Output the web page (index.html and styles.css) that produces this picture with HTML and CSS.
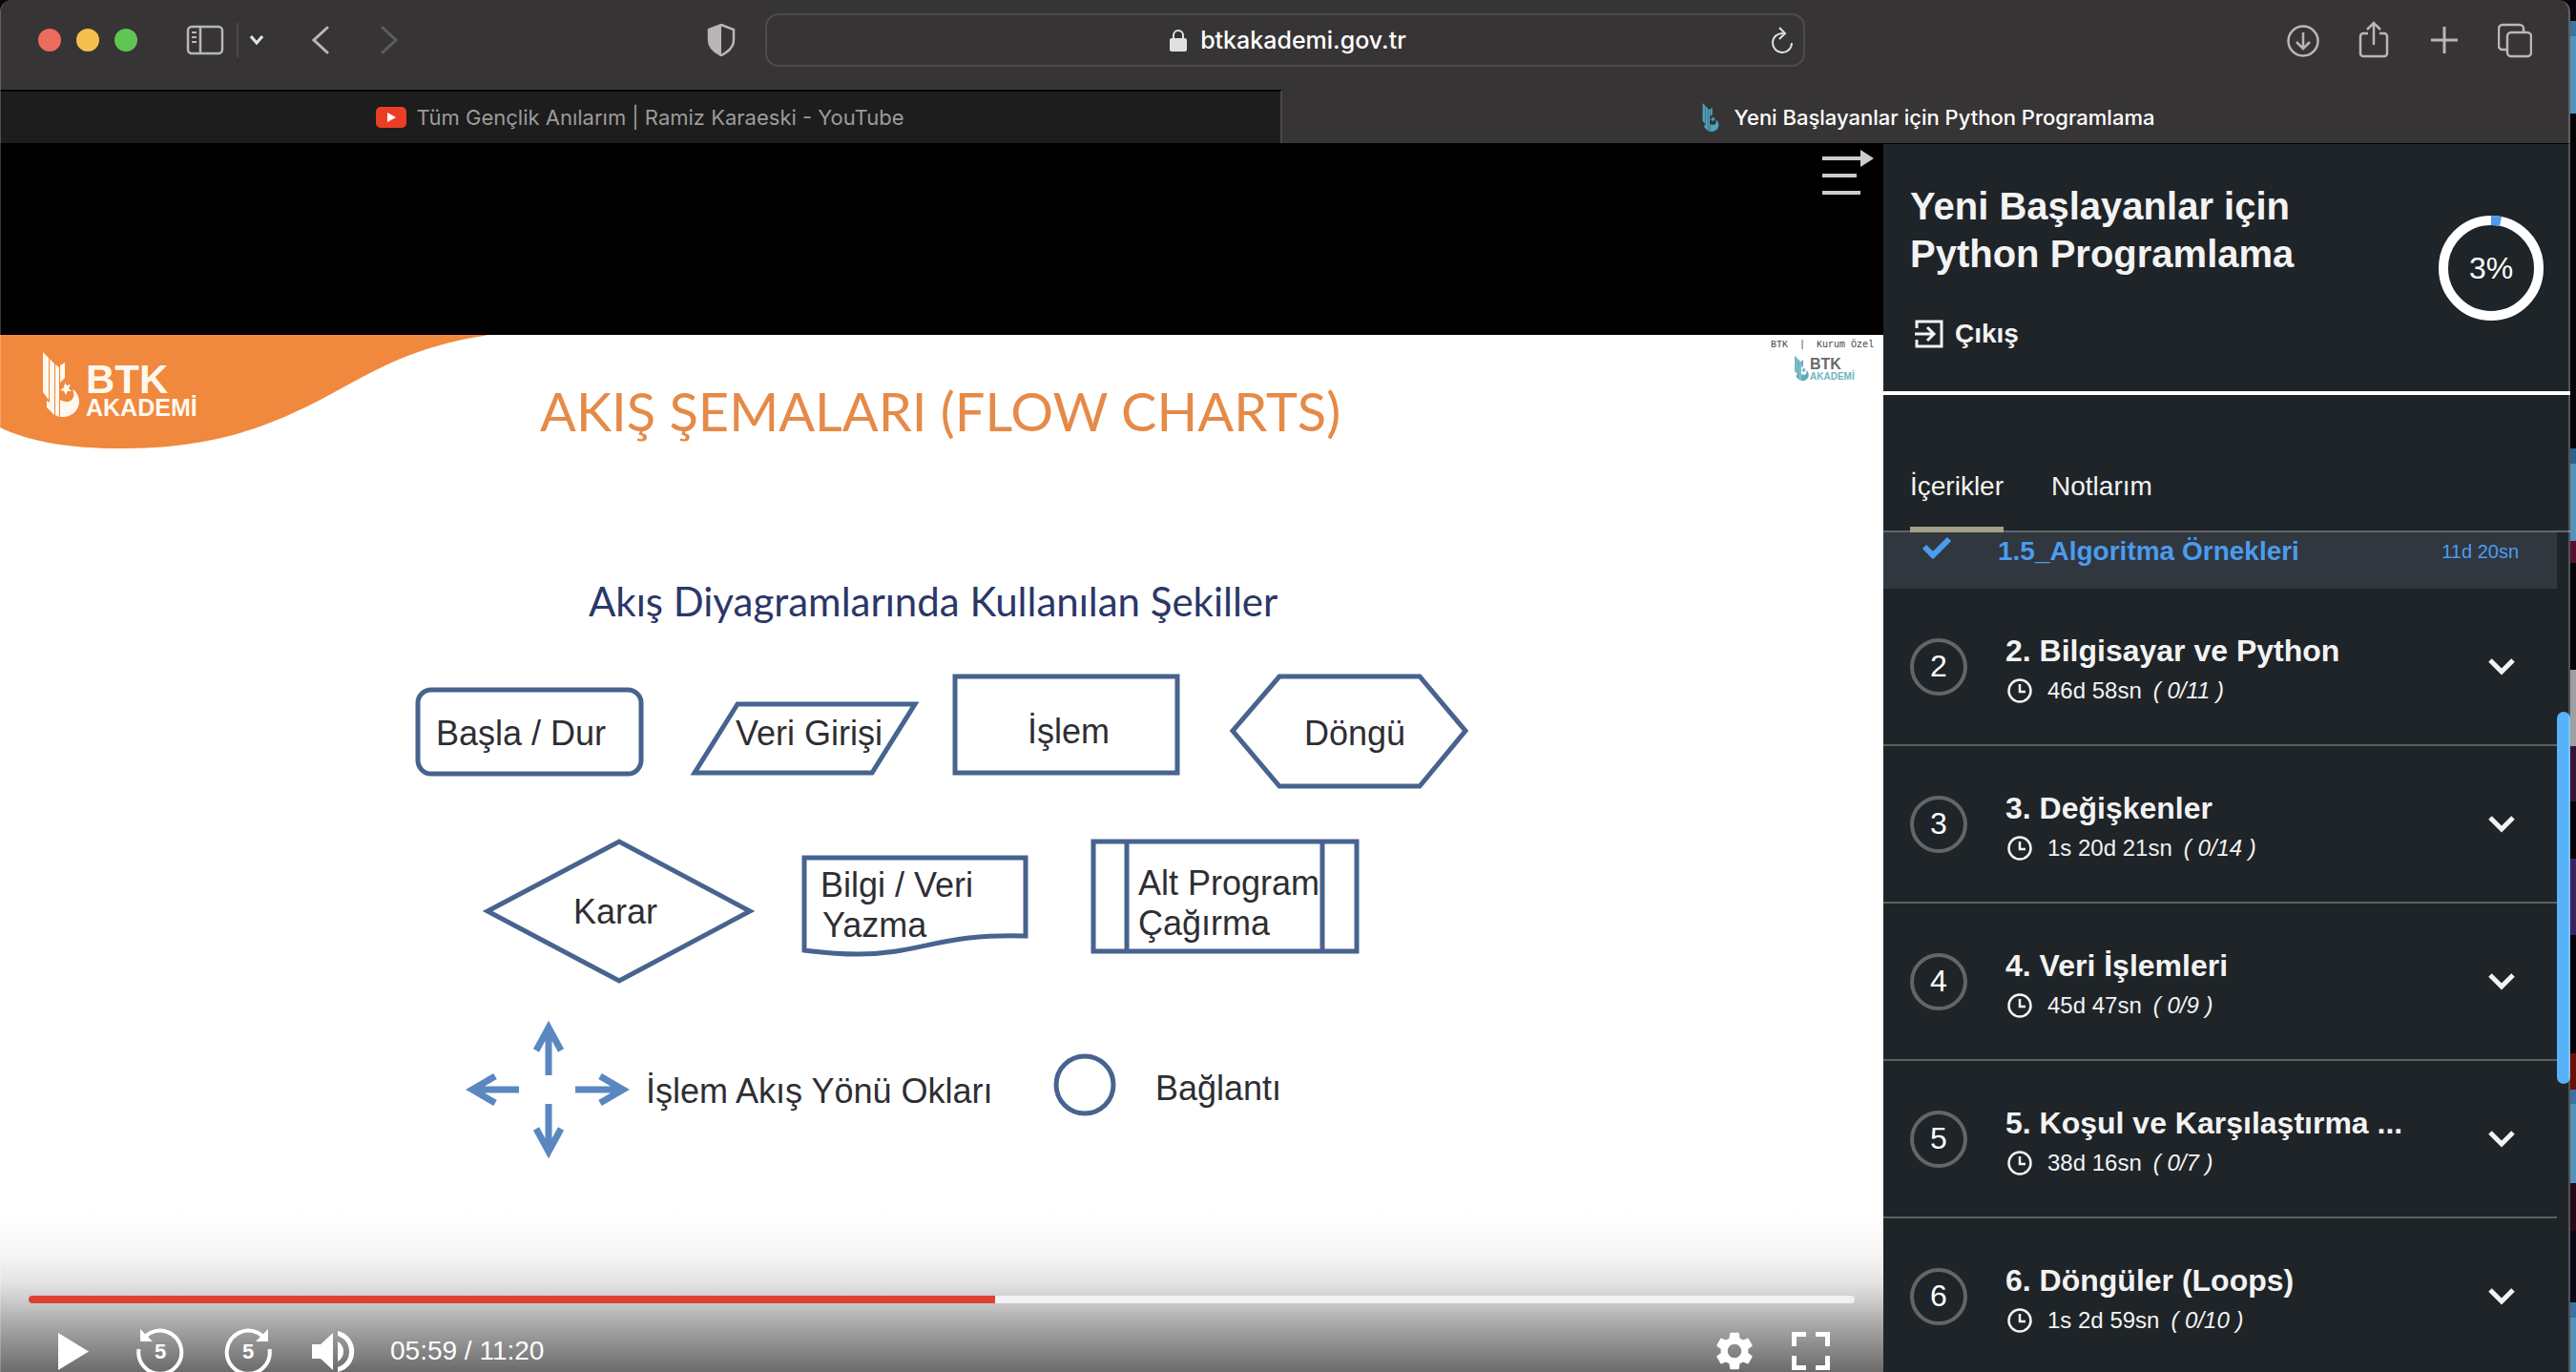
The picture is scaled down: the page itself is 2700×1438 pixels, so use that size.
FILE: index.html
```html
<!DOCTYPE html>
<html lang="tr">
<head>
<meta charset="utf-8">
<title>Yeni Başlayanlar için Python Programlama</title>
<link rel="stylesheet" href="styles.css">
</head>
<body>
<svg class="defs" width="0" height="0" aria-hidden="true">
  <defs>
    <symbol id="btk" viewBox="0 0 38 68">
      <path d="M0 0 L6 6 V50 L0 42Z M7 7 L12 12 V66 L4 58 V51 L7 53Z M13 13 L17 16 V68 L13 66Z M18 14 L23 11 V27 L18 32Z M23 32 l2 3 4-1-2 4 3 3-4 0-2 4-2-4-4-1 4-3Z M18 47 V68 C30 69 38 61 38 52 C38 46 35 41 31 39 C35 48 29 56 18 50Z"/>
    </symbol>
    <symbol id="clock" viewBox="0 0 26 26">
      <circle cx="13" cy="13" r="11.500" fill="none" stroke="currentColor" stroke-width="2.500"/>
      <path d="M13 6V14H19" fill="none" stroke="currentColor" stroke-width="2.500"/>
    </symbol>
    <symbol id="chevron" viewBox="0 0 28 18">
      <path d="M2 2 L14 14 L26 2" fill="none" stroke="currentColor" stroke-width="5"/>
    </symbol>
  </defs>
</svg>

<div class="window">
  <header class="toolbar">
    <div class="toolbar-side">
      <div class="lights"><span class="light red"></span><span class="light yellow"></span><span class="light green"></span></div>
      <button class="icon-btn sidebar-btn" aria-label="Kenar çubuğu">
        <svg width="40" height="32" viewBox="0 0 40 32" fill="none" stroke="currentColor"><rect x="2" y="2" width="36" height="28" rx="4" stroke-width="2.500"/><path d="M15 2V30" stroke-width="2.500"/><path d="M6 8H11M6 13H11M6 18H11" stroke-width="2"/></svg>
      </button>
      <span class="separator"></span>
      <button class="icon-btn menu-btn" aria-label="Sekme grupları">
        <svg width="14" height="10" viewBox="0 0 14 10" fill="none" stroke="#e4e4e4" stroke-width="3"><path d="M1 1 L7 8 L13 1"/></svg>
      </button>
      <button class="icon-btn back-btn" aria-label="Geri">
        <svg width="18" height="30" viewBox="0 0 18 30" fill="none" stroke="currentColor" stroke-width="3" stroke-linecap="round"><path d="M16 2 L2 15 L16 28"/></svg>
      </button>
      <button class="icon-btn forward-btn" aria-label="İleri">
        <svg width="18" height="30" viewBox="0 0 18 30" fill="none" stroke="currentColor" stroke-width="3" stroke-linecap="round"><path d="M2 2 L16 15 L2 28"/></svg>
      </button>
      <button class="icon-btn shield-btn" aria-label="Gizlilik raporu">
        <svg width="30" height="34" viewBox="0 0 30 34"><path d="M15 1 L28 6 V17 C28 25 21 30 15 33 C9 30 2 25 2 17 V6Z" fill="none" stroke="currentColor" stroke-width="2.500"/><path d="M15 1 V33 C9 30 2 25 2 17 V6Z" fill="currentColor"/></svg>
      </button>
    </div>
    <div class="address">
      <span class="address-text">
        <svg width="18" height="24" viewBox="0 0 18 24"><rect y="10" width="18" height="14" rx="2" fill="#e0e0e0"/><path d="M4 11V7a5 5 0 0 1 10 0V11" fill="none" stroke="#e0e0e0" stroke-width="2"/></svg>
        btkakademi.gov.tr
      </span>
      <button class="icon-btn reload-btn" aria-label="Yenile">
        <svg width="24" height="28" viewBox="0 0 24 28" fill="none" stroke="#e0e0e0" stroke-width="2"><path d="M13 7 A10 10 0 1 0 22 17"/><path d="M9 1 L15 7 L9 13"/></svg>
      </button>
    </div>
    <div class="toolbar-side toolbar-end">
      <button class="icon-btn" aria-label="İndirilenler"><svg width="36" height="40" viewBox="0 0 36 40" fill="none" stroke="currentColor" stroke-width="2.500"><circle cx="18" cy="21" r="15.500"/><path d="M18 12V29M11 22L18 29L25 22"/></svg></button>
      <button class="icon-btn" aria-label="Paylaş"><svg width="36" height="40" viewBox="0 0 36 40" fill="none" stroke="currentColor" stroke-width="2.500"><path d="M12 13H7a3 3 0 0 0-3 3V34a3 3 0 0 0 3 3H29a3 3 0 0 0 3-3V16a3 3 0 0 0-3-3H24M18 25V3M11 9L18 2L25 9"/></svg></button>
      <button class="icon-btn" aria-label="Yeni sekme"><svg width="36" height="40" viewBox="0 0 36 40" fill="none" stroke="currentColor" stroke-width="3"><path d="M4 20H32M18 6V34"/></svg></button>
      <button class="icon-btn" aria-label="Sekmeler"><svg width="36" height="40" viewBox="0 0 36 40" fill="none" stroke="currentColor" stroke-width="2.500"><rect x="10" y="12" width="25" height="25" rx="4"/><path d="M10 30H5a4 4 0 0 1-4-4V8a4 4 0 0 1 4-4H23a4 4 0 0 1 4 4V12"/></svg></button>
    </div>
  </header>

  <nav class="tabs">
    <a class="tab" href="#">
      <svg width="32" height="22" viewBox="0 0 32 22"><rect width="32" height="22" rx="5" fill="#ea3f26"/><path d="M12 6L21 11L12 16Z" fill="#fff"/></svg>
      Tüm Gençlik Anılarım | Ramiz Karaeski - YouTube
    </a>
    <a class="tab active" href="#">
      <svg class="tab-logo" width="18" height="30"><use href="#btk"/></svg>
      Yeni Başlayanlar için Python Programlama
    </a>
  </nav>

  <main class="course">
    <section class="player">
      <svg class="slide" viewBox="0 351 1974 1110" role="img" aria-label="Akış şemaları">
        <rect y="351" width="1974" height="1110" fill="#fff"/>
        <path d="M0 351H513C435 362 393 388 345 414C275 452 215 470 125 470C75 470 30 463 0 448Z" fill="#f0883e"/>
        <svg x="45" y="369" width="38" height="68" fill="#fff8ee"><use href="#btk"/></svg>
        <text class="logo-name light-fill" x="90" y="412">BTK</text>
        <text class="logo-sub light-fill" x="90" y="436">AKADEMİ</text>
        <text class="slide-title" x="566" y="452">AKIŞ ŞEMALARI (FLOW CHARTS)</text>
        <text class="stamp" x="1856" y="364">BTK  |  Kurum Özel</text>
        <svg x="1881" y="373" width="15" height="26" fill="#5fa9bb"><use href="#btk"/></svg>
        <text class="mini-name" x="1897" y="387">BTK</text>
        <text class="mini-sub" x="1897" y="398">AKADEMİ</text>
        <text class="slide-caption" x="617" y="646">Akış Diyagramlarında Kullanılan Şekiller</text>
        <g fill="none" stroke="#47638f" stroke-width="5">
          <rect x="438" y="723" width="234" height="88" rx="14"/>
          <path d="M773 738H959L914 810H728Z"/>
          <rect x="1001" y="709" width="233" height="101"/>
          <path d="M1292 766L1341 709H1488L1536 766L1488 824H1341Z"/>
          <path d="M511 955L649 882L786 955L649 1028Z"/>
          <path d="M843 899H1075V981C985 978 965 1000 900 1000C875 1000 860 998 843 996Z"/>
          <path d="M1146 882H1422V997H1146ZM1181 882V997M1386 882V997"/>
          <circle cx="1137" cy="1137" r="30"/>
        </g>
        <g fill="none" stroke="#5b87c0" stroke-width="7">
          <path d="M575 1127V1078M562 1101L575 1077L588 1101"/>
          <path d="M575 1157V1206M562 1183L575 1207L588 1183"/>
          <path d="M544 1142H496M519 1128L495 1142L519 1156"/>
          <path d="M603 1142H652M629 1128L653 1142L629 1156"/>
        </g>
        <g class="shape-label">
          <text x="457" y="781">Başla / Dur</text>
          <text x="771" y="781">Veri Girişi</text>
          <text x="1077" y="779">İşlem</text>
          <text x="1367" y="781">Döngü</text>
          <text x="601" y="968">Karar</text>
          <text x="860" y="940">Bilgi / Veri</text>
          <text x="862" y="982">Yazma</text>
          <text x="1193" y="938">Alt Program</text>
          <text x="1193" y="980">Çağırma</text>
          <text x="677" y="1156">İşlem Akış Yönü Okları</text>
          <text x="1211" y="1153">Bağlantı</text>
        </g>
      </svg>

      <button class="list-toggle" aria-label="Listeyi gizle">
        <svg width="54" height="48" viewBox="0 0 54 48" fill="#ccc"><path d="M0 7H40V0L54 9L40 18V11H0ZM0 25H36V29H0ZM0 43H40V47H0Z"/></svg>
      </button>

      <div class="controls">
        <input class="progress" type="range" min="0" max="680" value="359" aria-label="Konum">
        <div class="control-row">
          <button class="ctl play" aria-label="Oynat"><svg width="36" height="50" viewBox="0 0 36 50"><path d="M1 6V45L33 25.500Z" fill="#fff"/></svg></button>
          <button class="ctl back5" aria-label="5 saniye geri"><svg width="50" height="50" viewBox="0 0 50 50"><path d="M2.500 23A22.500 22.500 0 1 0 47 23A22.500 22.500 0 0 0 9 10" fill="none" stroke="#fff" stroke-width="4"/><path d="M4 2V15H17Z" fill="#fff"/><text class="five" x="25" y="33">5</text></svg></button>
          <button class="ctl fwd5" aria-label="5 saniye ileri"><svg width="50" height="50" viewBox="0 0 50 50"><path d="M47.500 23A22.500 22.500 0 1 1 3 23A22.500 22.500 0 0 1 41 10" fill="none" stroke="#fff" stroke-width="4"/><path d="M46 2V15H33Z" fill="#fff"/><text class="five" x="25" y="33">5</text></svg></button>
          <button class="ctl volume" aria-label="Ses"><svg width="46" height="50" viewBox="0 0 46 50" fill="#fff"><path d="M0 18H9L22 6V45L9 33H0Z"/><path d="M27 15C35 19 35 32 27 36Z"/><path d="M27 4C50 9 50 42 27 47V42C43 37 43 14 27 9Z"/></svg></button>
          <span class="time">05:59 / 11:20</span>
          <button class="ctl gear" aria-label="Ayarlar"><svg width="48" height="48" viewBox="0 0 24 24"><path fill="#fff" d="M19.140 12.940c.04-.3.060-.61.060-.94 0-.32-.02-.64-.07-.94l2.030-1.580a.49.490 0 0 0 .12-.61l-1.920-3.320a.488.488 0 0 0-.59-.22l-2.390.96c-.5-.38-1.030-.7-1.620-.94l-.36-2.540a.484.484 0 0 0-.48-.41h-3.840c-.24 0-.43.170-.47.410l-.36 2.540c-.59.240-1.130.570-1.620.940l-2.390-.96c-.22-.08-.47 0-.59.220L2.740 8.870c-.12.210-.08.470.12.610l2.030 1.580c-.05.300-.09.630-.09.940s.02.640.07.940l-2.030 1.580a.49.490 0 0 0-.12.610l1.920 3.320c.12.220.37.290.59.220l2.390-.96c.5.380 1.030.7 1.620.940l.36 2.540c.05.240.24.410.48.410h3.840c.24 0 .44-.17.470-.41l.36-2.540c.59-.24 1.130-.56 1.620-.94l2.390.96c.22.080.47 0 .59-.22l1.920-3.320c.12-.22.070-.47-.12-.61l-2.010-1.580zM12 15.600c-1.980 0-3.600-1.620-3.600-3.600s1.620-3.600 3.600-3.600 3.600 1.620 3.600 3.600-1.620 3.600-3.600 3.600z"/></svg></button>
          <button class="ctl full" aria-label="Tam ekran"><svg width="40" height="40" viewBox="0 0 40 40" fill="none" stroke="#fff" stroke-width="5"><path d="M2.500 15V2.500H15M25 2.500H37.500V15M37.500 25V37.500H25M15 37.500H2.500V25"/></svg></button>
        </div>
      </div>
    </section>

    <aside class="panel">
      <div class="panel-head">
        <div>
          <h1 class="course-title">Yeni Başlayanlar için<br>Python Programlama</h1>
          <a class="exit" href="#"><svg width="30" height="30" viewBox="0 0 30 30" fill="none" stroke="currentColor" stroke-width="3"><path d="M2 9V2H28V28H2V21M0 15H20M13 8L20 15L13 22"/></svg>Çıkış</a>
        </div>
        <div class="ring">
          <svg width="110" height="110" viewBox="0 0 110 110" fill="none" stroke-width="10"><circle cx="55" cy="55" r="50" stroke="#fff"/><path d="M55 5A50 50 0 0 1 65 6" stroke="#4b9ced"/></svg>
          <span class="ring-text">3%</span>
        </div>
      </div>
      <nav class="panel-tabs">
        <a class="panel-tab current" href="#">İçerikler</a>
        <a class="panel-tab" href="#">Notlarım</a>
      </nav>
      <div class="contents">
        <div class="list">
          <a class="lesson" href="#">
            <svg class="check" width="32" height="24" viewBox="0 0 32 24" fill="none" stroke="currentColor" stroke-width="6"><path d="M3 11L12 20L29 3"/></svg>
            <span class="lesson-name">1.5_Algoritma Örnekleri</span>
            <span class="lesson-time">11d 20sn</span>
          </a>
          <button class="chapter"><span class="num">2</span><span class="info"><span class="name">2. Bilgisayar ve Python</span><span class="meta"><svg width="26" height="26"><use href="#clock"/></svg>46d 58sn <em>( 0/11 )</em></span></span><svg width="28" height="18"><use href="#chevron"/></svg></button>
          <button class="chapter"><span class="num">3</span><span class="info"><span class="name">3. Değişkenler</span><span class="meta"><svg width="26" height="26"><use href="#clock"/></svg>1s 20d 21sn <em>( 0/14 )</em></span></span><svg width="28" height="18"><use href="#chevron"/></svg></button>
          <button class="chapter"><span class="num">4</span><span class="info"><span class="name">4. Veri İşlemleri</span><span class="meta"><svg width="26" height="26"><use href="#clock"/></svg>45d 47sn <em>( 0/9 )</em></span></span><svg width="28" height="18"><use href="#chevron"/></svg></button>
          <button class="chapter"><span class="num">5</span><span class="info"><span class="name">5. Koşul ve Karşılaştırma ...</span><span class="meta"><svg width="26" height="26"><use href="#clock"/></svg>38d 16sn <em>( 0/7 )</em></span></span><svg width="28" height="18"><use href="#chevron"/></svg></button>
          <button class="chapter"><span class="num">6</span><span class="info"><span class="name">6. Döngüler (Loops)</span><span class="meta"><svg width="26" height="26"><use href="#clock"/></svg>1s 2d 59sn <em>( 0/10 )</em></span></span><svg width="28" height="18"><use href="#chevron"/></svg></button>
        </div>
        <div class="scroll"><span class="thumb"></span></div>
      </div>
    </aside>
  </main>
</div>
</body>
</html>
```
FILE: styles.css
```css
* { box-sizing: border-box; }
body {
  margin: 0;
  padding-right: 6px;
  height: 100vh;
  overflow: hidden;
  font-family: "Liberation Sans", Arial, sans-serif;
  background: linear-gradient(#08040c 0 22px, #3a74a0 22px 38px, #5592bc 38px 119px, #050308 119px 470px, #2f6088 470px 486px, #5592bc 486px 567px, #5a1030 567px 590px, #050308 590px 702px, #a09fa2 702px 782px, #3a1238 782px 840px, #050308 840px 900px, #3a2360 900px 980px, #050308 980px 1104px, #6a1008 1104px 1142px, #3a74a0 1142px 1157px, #5592bc 1157px 1240px, #2a0a18 1240px 1290px, #0a0818 1290px 1365px, #3a74a0 1365px 1381px, #5592bc 1381px);
}
button { border: 0; padding: 0; background: none; color: inherit; font: inherit; text-align: left; }
a { color: inherit; text-decoration: none; }
svg { display: block; flex: none; }
.defs { position: absolute; }

.window {
  position: relative;
  display: flex;
  flex-direction: column;
  height: 100vh;
  overflow: hidden;
  border-radius: 12px 12px 0 0;
  background: #373435;
}
/* hairline around the window, drawn over its content */
.window::after {
  content: "";
  position: absolute;
  inset: 0;
  border: solid rgba(255, 255, 255, .22);
  border-width: 0 2px 0 1px;
  border-radius: 12px 12px 0 0;
  pointer-events: none;
}

/* browser toolbar */
.toolbar { display: flex; align-items: center; height: 94px; padding: 0 40px 10px; color: #b8b6b7; flex: none; }
.toolbar-side { display: flex; align-items: center; flex: 1 1 0; }
.toolbar-end { justify-content: flex-end; gap: 38px; }
.lights { display: flex; gap: 16px; }
.light { width: 24px; height: 24px; border-radius: 50%; }
.red { background: #ed6a5e; }
.yellow { background: #f5bf4f; }
.green { background: #61c554; }
.sidebar-btn { margin-left: 51px; }
.separator { width: 2px; height: 36px; margin: 0 12px 0 13px; background: #4b494a; }
.back-btn { margin-left: 51px; }
.forward-btn { margin-left: 54px; color: #5e5c5d; }
.shield-btn { margin: 0 31px 0 auto; }
.address {
  display: flex;
  align-items: center;
  width: 1090px;
  height: 56px;
  padding: 0 10px 0 12px;
  border: 2px solid #4d4b4c;
  border-radius: 14px;
}
.address-text { display: flex; align-items: center; justify-content: center; gap: 14px; flex: 1; padding-left: 28px; font: 500 25px/32px Inter, sans-serif; color: #fff; }

.tabs { display: flex; height: 56px; flex: none; }
.tab {
  display: flex;
  align-items: center;
  justify-content: center;
  gap: 10px;
  flex: 1;
  border-top: 2px solid #050505;
  border-right: 2px solid #4a4849;
  background: #1d1d1d;
  color: #9b9b9b;
  font: 400 22px/28px Inter, sans-serif;
}
.tab.active { border-color: #373435; background: #373435; color: #fff; font-weight: 500; gap: 16px; padding-left: 6px; }
.tab-logo { fill: #4ea3bd; }

.course { display: flex; flex: 1; min-height: 0; background: #000; }

/* video */
.player { position: relative; flex: 1; min-width: 0; padding-top: 201px; overflow: hidden; }
.slide { width: 100%; height: auto; font-family: "Liberation Sans", Arial, sans-serif; }
.slide-title { font: 400 56px Lato, sans-serif; fill: #e58a48; }
.slide-caption { font: 400 42px Lato, sans-serif; fill: #2b3768; }
.shape-label { font-size: 36px; fill: #2e2e33; }
.logo-name { font-size: 42px; font-weight: 700; }
.logo-sub { font-size: 25px; font-weight: 700; }
.light-fill { fill: #fff8ee; }
.stamp { font: 10px "Liberation Mono", monospace; white-space: pre; fill: #444; }
.mini-name { font-size: 16px; font-weight: 700; fill: #6a6a6a; }
.mini-sub { font-size: 10px; font-weight: 700; fill: #6fb3c2; }
.list-toggle { position: absolute; top: 7px; right: 10px; }

.controls {
  position: absolute;
  inset: auto 0 0;
  height: 170px;
  padding: 90px 30px 0;
  background: linear-gradient(rgba(0, 0, 0, 0) 0, rgba(0, 0, 0, .04) 28%, rgba(0, 0, 0, .11) 45%, rgba(0, 0, 0, .22) 58%, rgba(0, 0, 0, .36) 73%, rgba(0, 0, 0, .58) 100%);
}
.progress {
  display: block;
  width: 100%;
  height: 8px;
  margin: 0;
  appearance: none;
  border-radius: 4px;
  background: linear-gradient(90deg, #de4033 52.9%, #f1f1f1 52.9%);
}
.progress::-webkit-slider-thumb { appearance: none; width: 0; height: 8px; }
.control-row { display: flex; align-items: center; height: 50px; margin-top: 25px; padding: 0 26px 0 30px; color: #fff; }
.back5 { margin-left: 47px; }
.fwd5 { margin-left: 42px; }
.volume { margin-left: 42px; }
.time { margin-left: 36px; font-size: 28px; }
.gear { margin-left: auto; }
.full { margin-left: 36px; }
.five { font-size: 22px; font-weight: 700; fill: #fff; text-anchor: middle; }

/* course panel */
.panel { display: flex; flex-direction: column; width: 720px; margin-top: 1px; background: #1f2428; color: #f3f3f3; flex: none; }
.panel-head { display: flex; justify-content: space-between; height: 263px; padding: 40px 28px 0 28px; border-bottom: 4px solid #fff; flex: none; }
.course-title { margin: 0; font-size: 40px; line-height: 50px; font-weight: 700; }
.exit { display: flex; align-items: center; gap: 12px; margin: 43px 0 0 5px; font-size: 28px; line-height: 32px; font-weight: 700; }
.ring { display: grid; place-items: center; height: 110px; margin-top: 35px; color: #fff; font-size: 32px; }
.ring > * { grid-area: 1 / 1; }
.panel-tabs { display: flex; gap: 50px; height: 144px; padding-left: 28px; border-bottom: 2px solid #626669; font-size: 28px; line-height: 32px; flex: none; }
.panel-tab { height: 144px; padding-top: 80px; }
.current { border-bottom: 6px solid #a69f88; }

.contents { display: flex; flex: 1; min-height: 0; }
.list { flex: 1; overflow: hidden; }
.lesson { display: flex; align-items: flex-start; height: 59px; padding: 4px 40px 0; background: #30373f; color: #4b9ced; }
.lesson-name { flex: 1; margin-left: 48px; font-size: 28px; line-height: 32px; font-weight: 700; }
.lesson-time { font-size: 20px; line-height: 32px; }
.chapter { display: flex; align-items: center; width: 100%; height: 165px; padding: 0 44px 0 28px; border-bottom: 2px solid #5b6063; }
.num { width: 60px; height: 60px; border: 4px solid #626669; border-radius: 50%; font-size: 32px; line-height: 50px; text-align: center; color: #fff; }
.info { display: flex; flex-direction: column; gap: 10px; flex: 1; margin-left: 40px; padding-top: 4px; }
.name { font-size: 32px; line-height: 36px; font-weight: 700; }
.meta { display: flex; align-items: center; gap: 8px; padding-left: 2px; font-size: 24px; line-height: 28px; }
.meta svg { margin-right: 8px; }
.meta em { margin-left: 4px; }
.scroll { width: 14px; padding-top: 188px; }
.thumb { display: block; height: 390px; border-radius: 7px; background: #58b2f8; }
```
